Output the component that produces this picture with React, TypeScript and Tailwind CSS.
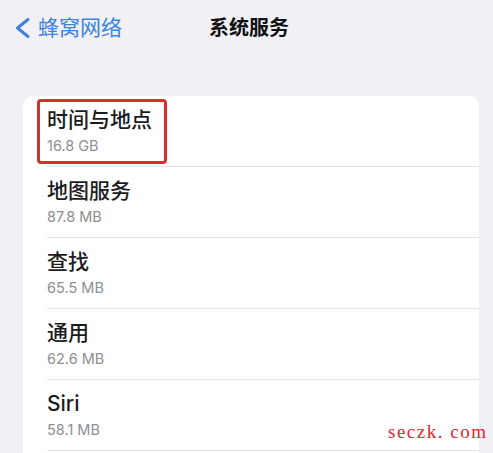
import React from "react";

interface Item {
  name: string;
  size: string;
}

const items: Item[] = [
  { name: "时间与地点", size: "16.8 GB" },
  { name: "地图服务", size: "87.8 MB" },
  { name: "查找", size: "65.5 MB" },
  { name: "通用", size: "62.6 MB" },
  { name: "Siri", size: "58.1 MB" },
];

const font = { fontFamily: '"Inter", "Noto Sans CJK SC", sans-serif' };

const Row: React.FC<{ item: Item; first: boolean }> = ({ item, first }) => {
  return (
    <div className="pl-[24px]">
      <div
        className={`flex flex-col pt-[11px] pb-[10px] ${first ? "" : "border-t border-[#e2e2e6]"}`}
      >
        <span className="text-[21px] leading-[26px] font-medium text-[#1c1c1e]">{item.name}</span>
        <span className="mt-[3px] text-[14.5px] leading-[20px] text-[#8e8e93]">{item.size}</span>
      </div>
    </div>
  );
};

export default function App() {
  return (
    <div className="relative w-[493px] h-[453px] overflow-hidden bg-[#f0f0f5]" style={font}>
      <div className="relative h-[56px] flex items-center">
        <div className="flex items-center pl-[13px] gap-[7px] text-[#3f83dc]">
          <svg width="18" height="22" viewBox="0 0 18 22" fill="none">
            <path
              d="M15 2.5 L4.5 11 L15 19.5"
              stroke="currentColor"
              strokeWidth="3"
              strokeLinecap="round"
              strokeLinejoin="round"
            />
          </svg>
          <span className="text-[21px] leading-[26px]">蜂窝网络</span>
        </div>
        <div className="absolute left-[209px] top-[15px] text-[20px] leading-[26px] font-bold text-[#111]">
          系统服务
        </div>
      </div>

      <div className="relative mt-[40px] ml-[23px] w-[456px] bg-white rounded-t-[10px]">
        {items.map((it, i) => (
          <Row key={it.name} item={it} first={i === 0} />
        ))}
        <div className="pl-[24px]">
          <div className="border-t border-[#e2e2e6] h-[10px]" />
        </div>
        <div className="absolute left-[14px] top-[3px] w-[130px] h-[65px] border-[3px] border-[#d6302b] rounded-[4px]" />
      </div>

      <div
        className="absolute left-[388px] top-[421px] text-[19px] leading-[22px] text-[#e4252b] tracking-[1.5px]"
        style={{ fontFamily: '"Liberation Serif", serif' }}
      >
        seczk. com
      </div>
    </div>
  );
}
